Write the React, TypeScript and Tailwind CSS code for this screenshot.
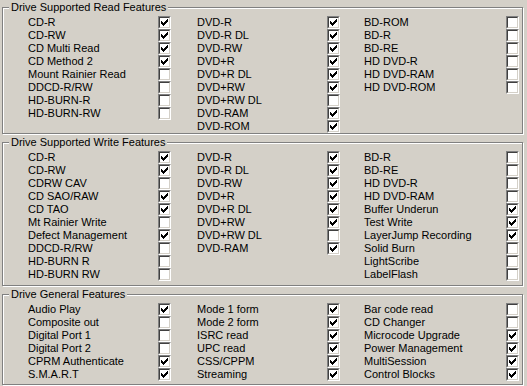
import React from "react";

type Item = [string, boolean];

const readCols: Item[][] = [
  [
    ["CD-R", true],
    ["CD-RW", true],
    ["CD Multi Read", true],
    ["CD Method 2", true],
    ["Mount Rainier Read", false],
    ["DDCD-R/RW", false],
    ["HD-BURN-R", false],
    ["HD-BURN-RW", false],
  ],
  [
    ["DVD-R", true],
    ["DVD-R DL", true],
    ["DVD-RW", true],
    ["DVD+R", true],
    ["DVD+R DL", true],
    ["DVD+RW", true],
    ["DVD+RW DL", false],
    ["DVD-RAM", true],
    ["DVD-ROM", true],
  ],
  [
    ["BD-ROM", false],
    ["BD-R", false],
    ["BD-RE", false],
    ["HD DVD-R", false],
    ["HD DVD-RAM", false],
    ["HD DVD-ROM", false],
  ],
];

const writeCols: Item[][] = [
  [
    ["CD-R", true],
    ["CD-RW", true],
    ["CDRW CAV", false],
    ["CD SAO/RAW", true],
    ["CD TAO", true],
    ["Mt Rainier Write", false],
    ["Defect Management", true],
    ["DDCD-R/RW", false],
    ["HD-BURN R", false],
    ["HD-BURN RW", false],
  ],
  [
    ["DVD-R", true],
    ["DVD-R DL", true],
    ["DVD-RW", true],
    ["DVD+R", true],
    ["DVD+R DL", true],
    ["DVD+RW", true],
    ["DVD+RW DL", false],
    ["DVD-RAM", true],
  ],
  [
    ["BD-R", false],
    ["BD-RE", false],
    ["HD DVD-R", false],
    ["HD DVD-RAM", false],
    ["Buffer Underun", true],
    ["Test Write", true],
    ["LayerJump Recording", true],
    ["Solid Burn", false],
    ["LightScribe", false],
    ["LabelFlash", false],
  ],
];

const generalCols: Item[][] = [
  [
    ["Audio Play", true],
    ["Composite out", false],
    ["Digital Port 1", false],
    ["Digital Port 2", false],
    ["CPRM Authenticate", true],
    ["S.M.A.R.T", true],
  ],
  [
    ["Mode 1 form", true],
    ["Mode 2 form", true],
    ["ISRC read", true],
    ["UPC read", true],
    ["CSS/CPPM", true],
    ["Streaming", true],
  ],
  [
    ["Bar code read", false],
    ["CD Changer", false],
    ["Microcode Upgrade", true],
    ["Power Management", true],
    ["MultiSession", true],
    ["Control Blocks", true],
  ],
];

function CheckBox({ checked }: { checked: boolean }) {
  return (
    <span className="block w-[13px] h-[13px] border border-t-[#808080] border-l-[#808080] border-b-white border-r-white">
      <span className="relative block w-[11px] h-[11px] bg-white border border-t-[#404040] border-l-[#404040] border-b-[#d4d0c8] border-r-[#d4d0c8]">
        {checked && (
          <svg
            width="7"
            height="7"
            viewBox="0 0 7 7"
            shapeRendering="crispEdges"
            className="absolute left-[1px] top-[1px]"
          >
            <path
              d="M6 0h1v1h-1z M5 1h2v1h-2z M0 2h1v1h-1z M4 2h3v1h-3z M0 3h2v1h-2z M3 3h3v1h-3z M0 4h5v1h-5z M1 5h3v1h-3z M2 6h1v1h-1z"
              fill="#000"
            />
          </svg>
        )}
      </span>
    </span>
  );
}

function Column({ items, labelW, className }: { items: Item[]; labelW: string; className?: string }) {
  return (
    <div className={`flex flex-col ${className ?? ""}`}>
      {items.map(([label, checked], i) => (
        <div key={i} className="flex items-center h-[13px]">
          <span className={`${labelW} leading-[13px] whitespace-nowrap`}>{label}</span>
          <CheckBox checked={checked} />
        </div>
      ))}
    </div>
  );
}

function Group({ title, cols, height }: { title: string; cols: Item[][]; height: string }) {
  return (
    <div
      className={`relative w-[521px] ${height} border border-[#808080] shadow-[inset_1px_1px_0_#fff,1px_1px_0_#fff]`}
    >
      <span className="absolute left-[6px] top-[-7px] bg-[#d4d0c8] px-[2px] leading-[13px]">{title}</span>
      <div className="flex pl-[25px] pt-[8px]">
        <Column items={cols[0]} labelW="w-[130px]" />
        <Column items={cols[1]} labelW="w-[130px]" className="ml-[26px]" />
        <Column items={cols[2]} labelW="w-[142px]" className="ml-[24px]" />
      </div>
    </div>
  );
}

export default function App() {
  return (
    <div
      className="w-[527px] h-[386px] bg-[#d4d0c8] text-black text-[11px] pt-[7px] pl-[2px] flex flex-col gap-[8px] overflow-hidden"
      style={{ fontFamily: '"Liberation Sans", Arial, sans-serif' }}
    >
      <Group title="Drive Supported Read Features" cols={readCols} height="h-[127px]" />
      <Group title="Drive Supported Write Features" cols={writeCols} height="h-[144px]" />
      <Group title="Drive General Features" cols={generalCols} height="h-[91px]" />
    </div>
  );
}
